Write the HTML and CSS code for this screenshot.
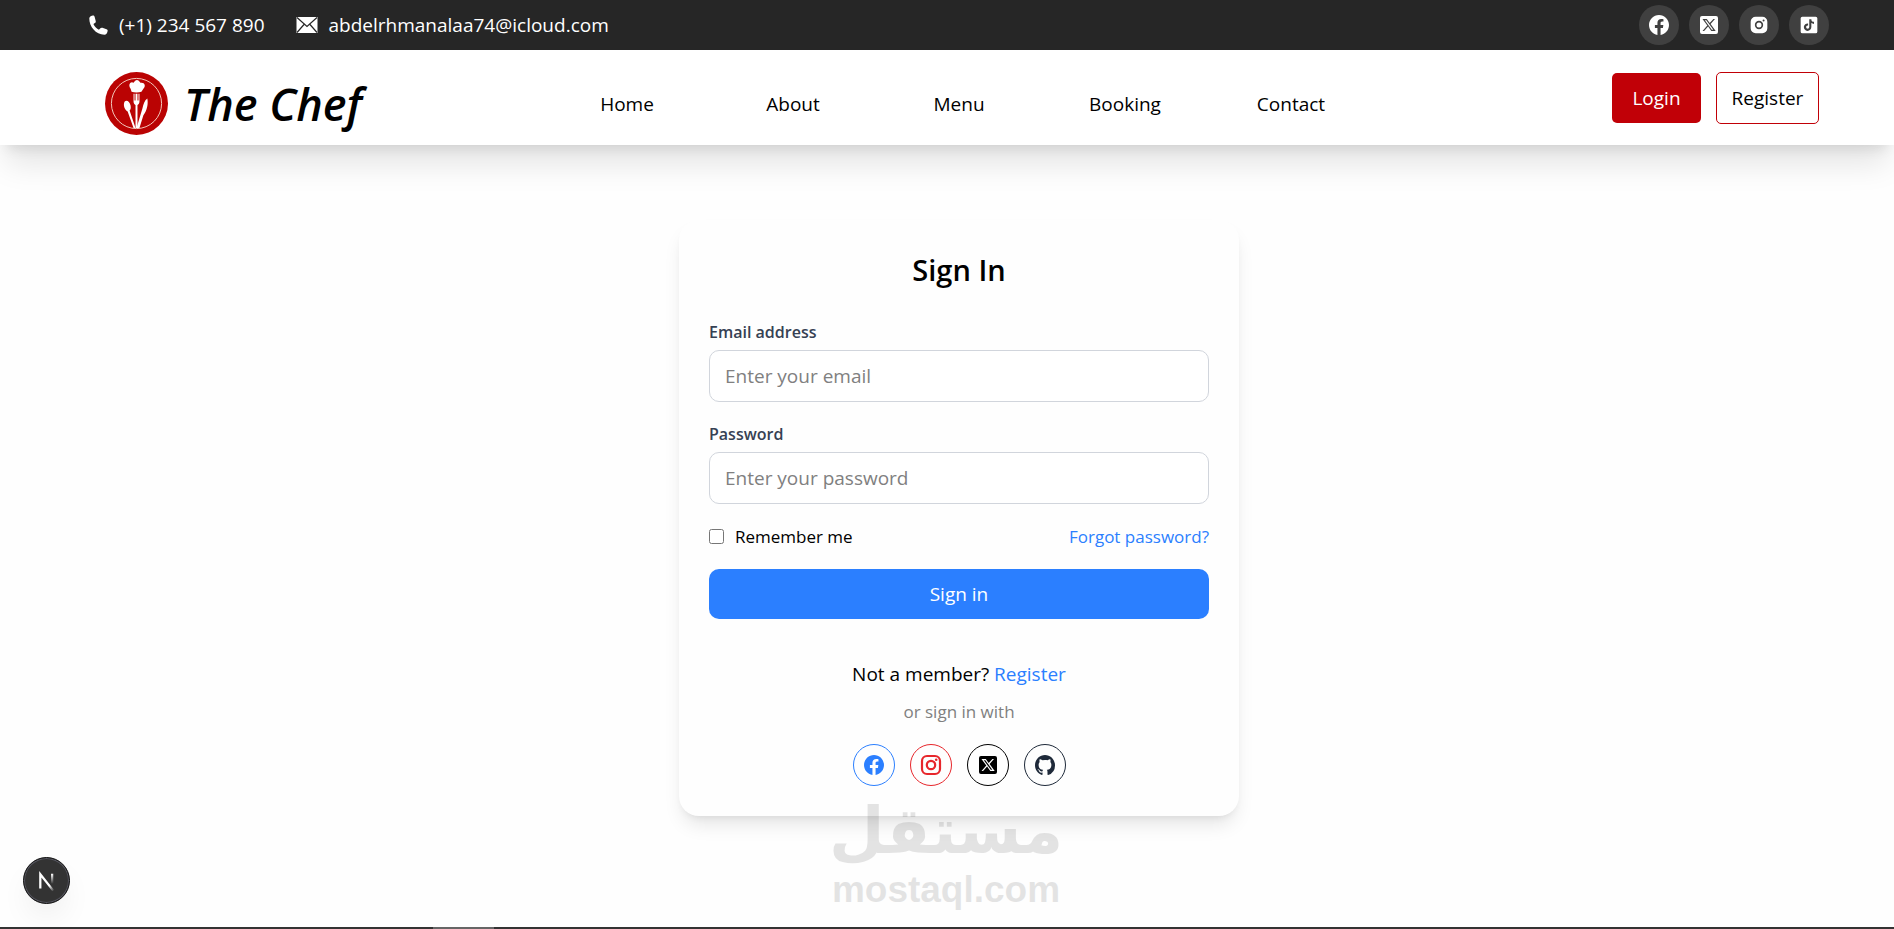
FILE: index.html
```html
<!DOCTYPE html>
<html lang="en">
<head>
  <meta charset="UTF-8" />
  <meta name="viewport" content="width=device-width, initial-scale=1.0" />
  <title>The Chef - Sign In</title>
  <link rel="stylesheet" href="styles.css">
</head>
<body>
  <!-- shared icons -->
  <svg class="sprite" aria-hidden="true">
    <symbol id="facebook" viewBox="0 0 24 24">
      <path d="M22 12.06C22 6.5 17.52 2 12 2S2 6.5 2 12.06c0 5.02 3.66 9.19 8.44 9.94v-7.03H7.9v-2.91h2.54V9.85c0-2.52 1.49-3.91 3.78-3.91 1.09 0 2.24.2 2.24.2v2.47H15.2c-1.24 0-1.63.77-1.63 1.57v1.88h2.78l-.45 2.91h-2.33V22C18.34 21.25 22 17.08 22 12.06z"/>
    </symbol>
    <symbol id="x" viewBox="0 0 24 24">
      <path fill-rule="evenodd" d="M5 3h14a2 2 0 0 1 2 2v14a2 2 0 0 1-2 2H5a2 2 0 0 1-2-2V5a2 2 0 0 1 2-2zM5.500 6l4.800 6.600L5.500 18h1.600l4-4.500 3.200 4.500h4.400l-5.100-7.100L18 6h-1.600l-3.700 4.100L9.800 6zM7.800 7.200h1.500l7 9.600h-1.500z"/>
    </symbol>
    <symbol id="insta" viewBox="0 0 24 24">
      <path fill-rule="evenodd" d="M8 2h8a6 6 0 0 1 6 6v8a6 6 0 0 1-6 6H8a6 6 0 0 1-6-6V8a6 6 0 0 1 6-6zM12 7a5 5 0 1 0 0 10 5 5 0 0 0 0-10zm0 2a3 3 0 1 1 0 6 3 3 0 0 1 0-6zM17.500 5.300a1.200 1.200 0 1 0 0 2.400 1.200 1.200 0 0 0 0-2.400z"/>
    </symbol>
    <symbol id="insta-line" viewBox="0 0 24 24">
      <rect x="3" y="3" width="18" height="18" rx="5" fill="none" stroke="currentColor" stroke-width="2.200"/>
      <circle cx="12" cy="12" r="4.200" fill="none" stroke="currentColor" stroke-width="2.200"/>
      <circle cx="17.200" cy="6.800" r="1.300"/>
    </symbol>
    <symbol id="tiktok" viewBox="0 0 24 24">
      <path fill-rule="evenodd" d="M4 2h16a2 2 0 0 1 2 2v16a2 2 0 0 1-2 2H4a2 2 0 0 1-2-2V4a2 2 0 0 1 2-2zM12.300 5v9.500a1.900 1.900 0 1 1-1.900-1.900l.5.050V10.100a4.500 4.500 0 1 0 3.900 4.400V9.700a5.500 5.500 0 0 0 3.200 1V8.200A3.200 3.200 0 0 1 14.800 5z"/>
    </symbol>
    <symbol id="github" viewBox="0 0 24 24">
      <path d="M12 2C6.480 2 2 6.600 2 12.250c0 4.530 2.870 8.370 6.840 9.730.5.090.68-.22.68-.5v-1.900c-2.780.620-3.370-1.210-3.370-1.210-.45-1.180-1.110-1.500-1.110-1.500-.91-.64.070-.62.070-.62 1 .070 1.530 1.060 1.530 1.060.89 1.570 2.340 1.110 2.910.85.090-.66.350-1.110.63-1.370-2.220-.26-4.560-1.140-4.560-5.070 0-1.120.39-2.030 1.030-2.750-.1-.26-.45-1.300.1-2.710 0 0 .84-.28 2.750 1.050A9.300 9.300 0 0 1 12 6.960c.85 0 1.710.12 2.500.35 1.910-1.330 2.750-1.050 2.750-1.050.55 1.410.2 2.450.1 2.710.64.720 1.030 1.630 1.030 2.750 0 3.940-2.340 4.800-4.570 5.060.36.320.68.940.68 1.900v2.810c0 .27.180.59.690.49A10.200 10.200 0 0 0 22 12.250C22 6.600 17.520 2 12 2z"/>
    </symbol>
  </svg>

  <div class="topbar">
    <div class="contact-info">
      <a class="phone" href="tel:+1234567890">
        <svg class="icon" viewBox="0 0 24 24"><path d="M2.500 4.500C2.500 3 5 1.500 6.500 1.500c1 0 1.500.5 1.800 1.500l1.200 4.500c.3 1-.1 1.700-.9 2.200L7 11c1.500 3 3.500 5 6 6.300l1.600-1.700c.6-.7 1.300-.9 2.200-.6l4.500 1.600c1 .4 1.400 1 1.200 2-.4 2.300-1.600 4-3.500 4C9.500 22 2.500 14 2.500 4.500z"/></svg>
        (+1) 234 567 890
      </a>
      <a class="mail" href="mailto:abdelrhmanalaa74@icloud.com">
        <svg class="icon" viewBox="0 0 24 24"><path d="M1.500 4h21v16h-21z"/><path d="M2 4.500l10 9 10-9M2 19.500l7-8M22 19.500l-7-8" fill="none" stroke="#262626" stroke-width="1.200"/></svg>
        abdelrhmanalaa74@icloud.com
      </a>
    </div>
    <div class="top-social">
      <a href="#" aria-label="Facebook"><svg class="icon"><use href="#facebook"/></svg></a>
      <a href="#" aria-label="X"><svg class="icon"><use href="#x"/></svg></a>
      <a href="#" aria-label="Instagram"><svg class="icon small"><use href="#insta"/></svg></a>
      <a href="#" aria-label="TikTok"><svg class="icon small"><use href="#tiktok"/></svg></a>
    </div>
  </div>

  <header class="header">
    <a class="brand" href="#">
      <svg class="logo" viewBox="0 0 64 64">
        <circle cx="32" cy="32" r="32" fill="#ba0303"/>
        <circle cx="32" cy="32" r="25.500" fill="none" stroke="#f3c9bd" stroke-width="1"/>
        <g fill="#fff">
          <path d="M27 20l-1-3c-3-4 0-8 3-6 2-4 5-4 7 0 4-1 6 3 3 6l-2 3c-3 1-7 1-10 0z"/>
          <path d="M29 22h1v7h1v-7h2v7h1v-7h1v8c0 2-1 3-2 3.500V57h-2V33.500c-1-.5-2-1.500-2-3.500z"/>
          <path d="M20 30c2-2 5 0 6 4 .5 3 0 4-1 5l6 18h-2l-6-17c-3-1-5-7-3-10z"/>
          <path d="M43 27c1 5 0 12-4 17l-4 13h-3l6-20c1-4 2-8 5-10z"/>
        </g>
      </svg>
      <span class="brand-name">The Chef</span>
    </a>
    <nav class="nav">
      <a href="#">Home</a>
      <a href="#">About</a>
      <a href="#">Menu</a>
      <a href="#">Booking</a>
      <a href="#">Contact</a>
    </nav>
    <div class="actions">
      <button class="btn-login" type="button">Login</button>
      <button class="btn-register" type="button">Register</button>
    </div>
  </header>

  <main class="main">
    <form class="card">
      <h2>Sign In</h2>
      <label class="field-label" for="email">Email address</label>
      <input class="field" type="email" id="email" placeholder="Enter your email" />
      <label class="field-label" for="password">Password</label>
      <input class="field" type="password" id="password" placeholder="Enter your password" />
      <div class="options">
        <div class="remember">
          <input type="checkbox" id="remember" />
          <label for="remember">Remember me</label>
        </div>
        <a href="#">Forgot password?</a>
      </div>
      <button class="btn-submit" type="submit">Sign in</button>
      <p class="member">Not a member? <a href="#">Register</a></p>
      <p class="or">or sign in with</p>
      <div class="providers">
        <a class="facebook" href="#" aria-label="Facebook"><svg class="icon"><use href="#facebook"/></svg></a>
        <a class="insta" href="#" aria-label="Instagram"><svg class="icon"><use href="#insta-line"/></svg></a>
        <a class="x" href="#" aria-label="X"><svg class="icon"><use href="#x"/></svg></a>
        <a class="github" href="#" aria-label="GitHub"><svg class="icon"><use href="#github"/></svg></a>
      </div>
    </form>
  </main>

  <div class="watermark">
    <span class="mark-ar" lang="ar" dir="rtl">مستقل</span>
    <span class="mark-en">mostaql.com</span>
  </div>

  <button class="dev-badge" type="button" aria-label="Dev tools">
    <svg viewBox="0 0 40 40">
      <defs>
        <linearGradient id="fade" x1="0" y1="0" x2="0" y2="1">
          <stop offset="0" stop-color="#fff"/>
          <stop offset="1" stop-color="#fff" stop-opacity="0"/>
        </linearGradient>
        <linearGradient id="fade2" x1="0" y1="0" x2="1" y2="1">
          <stop offset=".7" stop-color="#fff"/>
          <stop offset="1" stop-color="#fff" stop-opacity=".1"/>
        </linearGradient>
      </defs>
      <path d="M14.500 27V14.500L26 29" fill="none" stroke="url(#fade2)" stroke-width="2"/>
      <rect x="24" y="14" width="2" height="9" fill="url(#fade)"/>
    </svg>
  </button>
  <div class="bottom-line"><div class="bottom-thumb"></div></div>
</body>
</html>
```
FILE: styles.css
```css
* {
  box-sizing: border-box;
}
body {
  margin: 0;
  min-height: 100vh;
  overflow: hidden;
  font-family: 'Open Sans', 'Noto Sans', sans-serif;
  font-size: 19px;
  line-height: 30px;
  color: #000;
  background: #fefefe;
}
a {
  color: inherit;
  text-decoration: none;
}
button,
input {
  font-family: inherit;
  font-size: inherit;
}
button {
  cursor: pointer;
}
.sprite {
  position: absolute;
  width: 0;
  height: 0;
}
.icon {
  width: 24px;
  height: 24px;
  fill: currentColor;
}
.icon.small {
  width: 20px;
  height: 20px;
}
.topbar {
  display: flex;
  justify-content: space-between;
  align-items: center;
  height: 50px;
  padding: 0 65px 0 87px;
  color: #fff;
  background: #262626;
}
.contact-info {
  display: flex;
  gap: 30px;
}
.phone,
.mail {
  display: flex;
  align-items: center;
  gap: 10px;
}
.phone .icon {
  width: 22px;
}
.top-social {
  display: flex;
  gap: 10px;
}
.top-social a {
  display: flex;
  align-items: center;
  justify-content: center;
  width: 40px;
  height: 40px;
  border-radius: 50%;
  background: #404040;
}
.header {
  display: grid;
  grid-template-columns: 1fr 830px 1fr;
  height: 95px;
  padding: 0 75px 0 105px;
  background: #fff;
  box-shadow: 0 25px 31px -6px rgba(0, 0, 0, 0.1), 0 10px 12px -7px rgba(0, 0, 0, 0.1);
}
.brand {
  display: flex;
  align-items: center;
  gap: 16px;
  padding-top: 12px;
}
.logo {
  width: 63px;
  height: 63px;
}
.brand-name {
  font-size: 45px;
  font-weight: 600;
  font-style: italic;
  line-height: 60px;
  white-space: nowrap;
}
.nav {
  display: grid;
  grid-template-columns: repeat(5, 1fr);
  align-items: center;
  justify-items: center;
  padding-top: 12px;
  margin: 0 3px 0 -3px;
}
.actions {
  display: flex;
  justify-content: flex-end;
  align-items: center;
  gap: 15px;
}
.btn-login {
  width: 89px;
  height: 50px;
  color: #fff;
  background: #c10007;
  border: none;
  border-radius: 5px;
}
.btn-register {
  width: 103px;
  height: 52px;
  padding: 0;
  color: #000;
  background: #fff;
  border: 1px solid #c10007;
  border-radius: 5px;
}
.main {
  display: flex;
  justify-content: center;
  padding: 75px 20px;
}
.card {
  width: 100%;
  max-width: 560px;
  padding: 30px;
  margin-left: 24px;
  background: #fefefe;
  border-radius: 20px;
  box-shadow: 0 12px 19px -4px rgba(0, 0, 0, 0.1), 0 5px 8px -5px rgba(0, 0, 0, 0.1);
}
.card h2 {
  margin: 0 0 30px;
  font-size: 29px;
  font-weight: 600;
  line-height: 40px;
  text-align: center;
}
.field-label {
  display: block;
  margin-bottom: 5px;
  font-size: 16px;
  font-weight: 600;
  line-height: 25px;
  color: #364153;
}
.field {
  display: block;
  width: 100%;
  height: 52px;
  padding: 0 15px;
  margin-bottom: 20px;
  background: #fff;
  border: 1px solid #d1d5dc;
  border-radius: 10px;
}
.field::placeholder {
  color: #808080;
}
.options {
  display: flex;
  justify-content: space-between;
  margin-bottom: 20px;
  font-size: 17px;
  line-height: 25px;
}
.remember {
  display: flex;
  align-items: center;
  gap: 11px;
}
.remember input {
  width: 15px;
  height: 15px;
  margin: 0;
}
.options a,
.member a {
  color: #2b7fff;
}
.btn-submit {
  display: block;
  width: 100%;
  height: 50px;
  color: #fff;
  background: #2b7fff;
  border: none;
  border-radius: 10px;
}
.member {
  margin: 40px 0 10px;
  text-align: center;
}
.or {
  margin: 0 0 20px;
  font-size: 17px;
  line-height: 25px;
  color: #808080;
  text-align: center;
}
.providers {
  display: flex;
  justify-content: center;
  gap: 15px;
}
.providers a {
  display: flex;
  align-items: center;
  justify-content: center;
  width: 42px;
  height: 42px;
  border: 1px solid currentColor;
  border-radius: 50%;
}
.facebook {
  color: #2b7fff;
}
.insta {
  color: #e7262b;
}
.x {
  color: #000;
}
.github {
  color: #1e2939;
}
.watermark {
  position: absolute;
  left: 50%;
  bottom: 18px;
  display: flex;
  flex-direction: column;
  align-items: center;
  width: 228px;
  margin-left: -115px;
  color: #000;
  opacity: 0.1;
  pointer-events: none;
}
.mark-ar {
  font-family: 'DejaVu Sans', sans-serif;
  font-size: 64px;
  font-weight: bold;
  line-height: 76px;
}
.mark-en {
  font-family: 'Liberation Sans', sans-serif;
  font-size: 37px;
  font-weight: bold;
  line-height: 42px;
}
.dev-badge {
  position: fixed;
  left: 23px;
  bottom: 25px;
  width: 47px;
  height: 47px;
  padding: 0;
  background: #333;
  border: 1px solid #111;
  border-radius: 50%;
  box-shadow: inset 0 0 0 1px #55555f, 0 16px 32px -8px rgba(0, 0, 0, 0.1);
}
.dev-badge svg {
  display: block;
  width: 100%;
}
.bottom-line {
  position: fixed;
  left: 0;
  right: 0;
  bottom: 0;
  height: 2px;
  padding-left: 433px;
  background: #333;
}
.bottom-thumb {
  width: 61px;
  height: 2px;
  background: #666;
}
```
